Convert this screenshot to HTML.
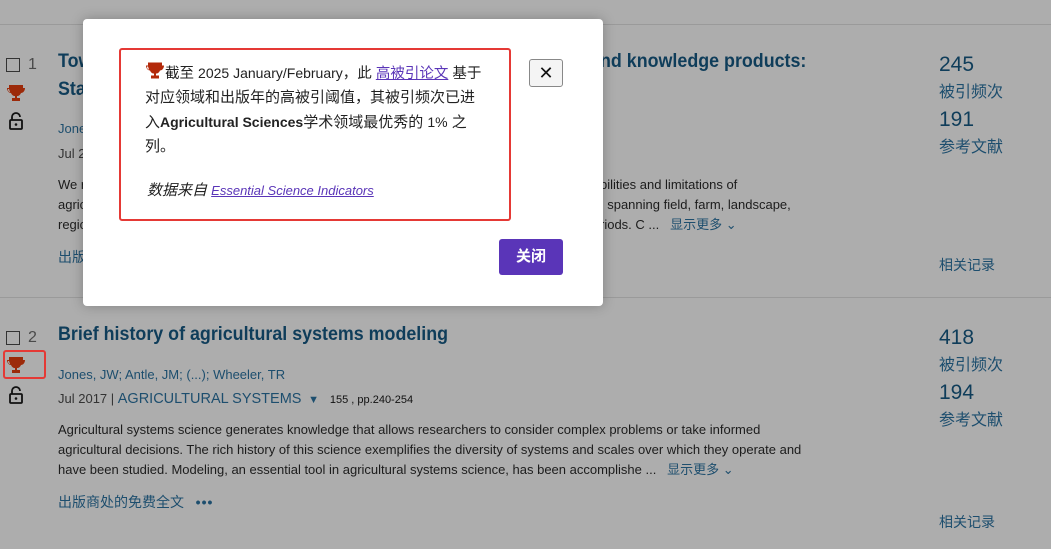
<!DOCTYPE html>
<html><head><meta charset="utf-8"><style>
*{margin:0;padding:0;box-sizing:border-box}
body{width:1051px;height:549px;overflow:hidden;background:#adadad;font-family:"Liberation Sans","Noto Sans CJK SC",sans-serif;position:relative;color:#1a1a1a}
.abs{position:absolute;white-space:nowrap}
.line{position:absolute;left:0;width:1051px;height:1px;background:#9a9a9a}
.cb{position:absolute;width:14px;height:14px;border:1.5px solid #333}
.num{font-size:16px;color:#4a4a4a}
.title{font-size:19px;font-weight:bold;color:#0f3d5a;transform:scaleX(0.94);transform-origin:left}
.link{color:#1d4e6e;font-size:13px}
.small{font-size:13px;color:#222}
.abst{font-size:13px;line-height:20px;color:#1c1c1c}
.stat{font-size:21px;color:#0f3d5a}
.statl{font-size:16px;color:#1d4e6e}
.modal{position:absolute;left:83px;top:19px;width:520px;height:287px;background:#fff;border-radius:4px;box-shadow:0 0 12px rgba(0,0,0,.25)}
.red{position:absolute;left:36px;top:29px;width:392px;height:173px;border:2.5px solid #e53935;border-radius:3px}
</style></head><body>
<div class="line" style="top:24px"></div>
<div class="line" style="top:297px"></div>

<!-- row1 -->
<div class="cb" style="left:6px;top:58px"></div>
<div class="abs num" style="left:28px;top:56px">1</div>
<svg class="abs" style="left:6px;top:84px" width="20" height="18" viewBox="0 0 20 18"><path d="M3 1h14v3h2c0 3-2 5-4 5-1 2-2 3-4 3v2h3v3H6v-3h3v-2c-2 0-3-1-4-3-2 0-4-2-4-5h2z M3 5H2c0 2 1 3 2 3z M17 5h1c0 2-1 3-2 3z" fill="#9c2a0a"/></svg>
<svg class="abs" style="left:9px;top:112px" width="14" height="18" viewBox="0 0 14 18"><path d="M3 8V5a4 4 0 0 1 8 0" fill="none" stroke="#111" stroke-width="1.8"/><rect x="1" y="8" width="12" height="9" rx="1" fill="none" stroke="#111" stroke-width="1.8"/><circle cx="7" cy="12.5" r="1.3" fill="#111"/></svg>
<div class="abs title" style="left:58px;top:51px">Tow</div>
<div class="abs title" style="left:58px;top:79px">Sta</div>
<div class="abs link" style="left:58px;top:121px">Jone</div>
<div class="abs small" style="left:58px;top:146px;color:#333">Jul 2</div>
<div class="abs abst" style="left:58px;top:175px">We r<br>agric<br>regic</div>
<div class="abs link" style="left:58px;top:247px;font-size:14px">出版</div>
<div class="abs title" style="left:600px;top:51px">nd knowledge products:</div>
<div class="abs abst" style="left:600px;top:175px">bilities and limitations of<br>, spanning field, farm, landscape,<br>riods. C ...&nbsp;&nbsp; <span style="color:#1d4e6e">显示更多 ⌄</span></div>
<div class="abs stat" style="left:939px;top:53px">245</div>
<div class="abs statl" style="left:939px;top:78px">被引频次</div>
<div class="abs stat" style="left:939px;top:108px">191</div>
<div class="abs statl" style="left:939px;top:133px">参考文献</div>
<div class="abs link" style="left:939px;top:255px;font-size:14px">相关记录</div>

<!-- row2 -->
<div class="cb" style="left:6px;top:331px"></div>
<div class="abs num" style="left:28px;top:329px">2</div>
<svg class="abs" style="left:6px;top:356px" width="20" height="18" viewBox="0 0 20 18"><path d="M3 1h14v3h2c0 3-2 5-4 5-1 2-2 3-4 3v2h3v3H6v-3h3v-2c-2 0-3-1-4-3-2 0-4-2-4-5h2z M3 5H2c0 2 1 3 2 3z M17 5h1c0 2-1 3-2 3z" fill="#9c2a0a"/></svg>
<div class="abs" style="left:3px;top:350px;width:43px;height:29px;border:2px solid #e53935;border-radius:3px"></div>
<svg class="abs" style="left:9px;top:386px" width="14" height="18" viewBox="0 0 14 18"><path d="M3 8V5a4 4 0 0 1 8 0" fill="none" stroke="#111" stroke-width="1.8"/><rect x="1" y="8" width="12" height="9" rx="1" fill="none" stroke="#111" stroke-width="1.8"/><circle cx="7" cy="12.5" r="1.3" fill="#111"/></svg>
<div class="abs title" style="left:58px;top:324px">Brief history of agricultural systems modeling</div>
<div class="abs link" style="left:58px;top:367px">Jones, JW; Antle, JM; (...); Wheeler, TR</div>
<div class="abs small" style="left:58px;top:391px;color:#333">Jul 2017 | <span style="color:#1d4e6e;font-size:14.5px">AGRICULTURAL SYSTEMS</span> <span style="color:#1d4e6e;font-size:11px">&nbsp;▼</span> &nbsp; <span style="font-size:11px;color:#111">155 , pp.240-254</span></div>
<div class="abs abst" style="left:58px;top:420px">Agricultural systems science generates knowledge that allows researchers to consider complex problems or take informed<br>agricultural decisions. The rich history of this science exemplifies the diversity of systems and scales over which they operate and<br>have been studied. Modeling, an essential tool in agricultural systems science, has been accomplishe ...&nbsp;&nbsp; <span style="color:#1d4e6e">显示更多 ⌄</span></div>
<div class="abs link" style="left:58px;top:492px;font-size:14px">出版商处的免费全文 &nbsp; <b style="letter-spacing:1px">•••</b></div>
<div class="abs stat" style="left:939px;top:326px">418</div>
<div class="abs statl" style="left:939px;top:351px">被引频次</div>
<div class="abs stat" style="left:939px;top:381px">194</div>
<div class="abs statl" style="left:939px;top:406px">参考文献</div>
<div class="abs link" style="left:939px;top:512px;font-size:14px">相关记录</div>

<!-- modal -->
<div class="modal">
 <div class="red"></div>
 <div class="abs" style="left:62px;top:42px;font-size:15px;line-height:24px;color:#222">
  <svg width="20" height="19" viewBox="0 0 20 18" style="vertical-align:-2px"><path d="M3 1h14v3h2c0 3-2 5-4 5-1 2-2 3-4 3v2h3v3H6v-3h3v-2c-2 0-3-1-4-3-2 0-4-2-4-5h2z M3 5H2c0 2 1 3 2 3z M17 5h1c0 2-1 3-2 3z" fill="#b3290a"/></svg><span style="font-size:14.5px">截至 <span style="font-size:14px">2025 January/February</span>，此 <span style="color:#5a35b8;text-decoration:underline">高被引论文</span> 基于</span><br>对应领域和出版年的高被引阈值，其被引频次已进<br>入<b style="font-size:14px">Agricultural Sciences</b>学术领域最优秀的 <span style="font-size:14px">1%</span> 之<br>列。
 </div>
 <div class="abs" style="left:64px;top:160px;font-size:15px;font-style:italic;color:#222">数据来自 <span style="color:#5a35b8;text-decoration:underline;font-size:13px">Essential Science Indicators</span></div>
 <div class="abs" style="left:446px;top:40px;width:34px;height:28px;border:1px solid #888;border-radius:3px;background:#f4f4f4;text-align:center;font-size:18px;line-height:26px;color:#111">✕</div>
 <div class="abs" style="left:416px;top:220px;width:64px;height:36px;background:#5a35b8;border-radius:3px;color:#fff;font-weight:bold;font-size:15px;text-align:center;line-height:36px">关闭</div>
</div>
</body></html>
